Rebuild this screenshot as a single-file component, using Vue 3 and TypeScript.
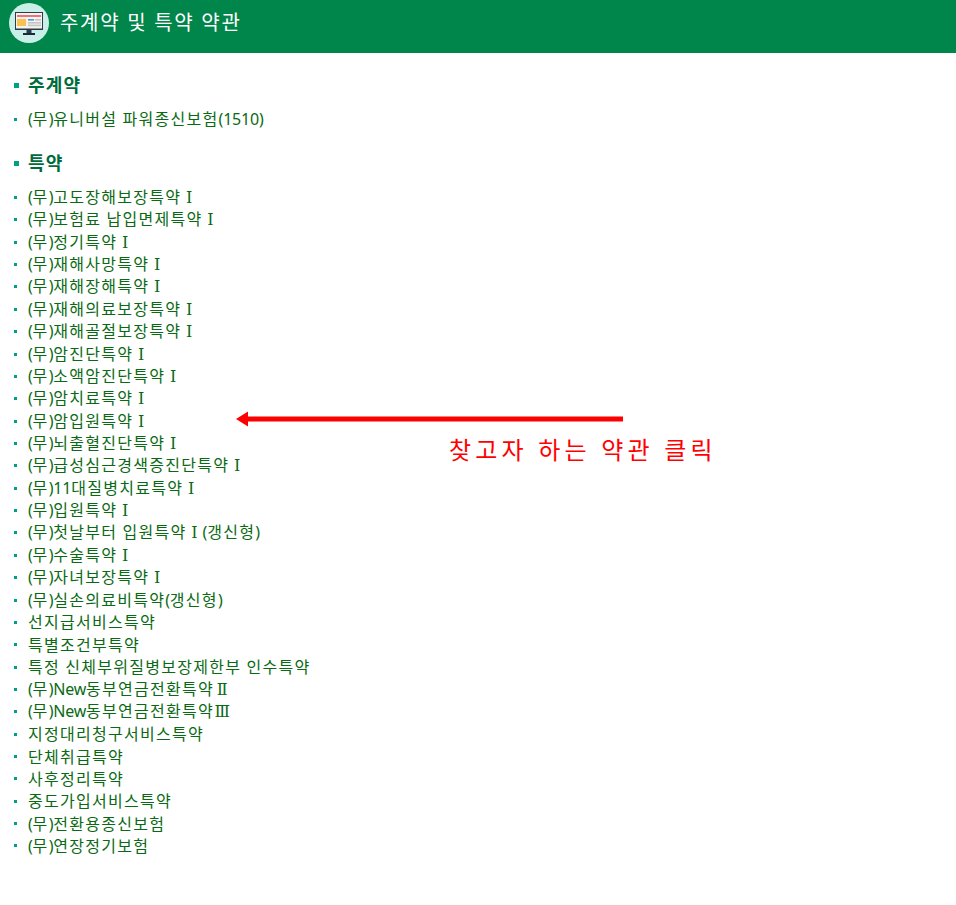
<script setup lang="ts">
interface Run { text: string; kind: string }

const riders: string[] = [
  '(무)고도장해보장특약Ⅰ','(무)보험료 납입면제특약Ⅰ','(무)정기특약Ⅰ','(무)재해사망특약Ⅰ','(무)재해장해특약Ⅰ',
  '(무)재해의료보장특약Ⅰ','(무)재해골절보장특약Ⅰ','(무)암진단특약Ⅰ','(무)소액암진단특약Ⅰ','(무)암치료특약Ⅰ',
  '(무)암입원특약Ⅰ','(무)뇌출혈진단특약Ⅰ','(무)급성심근경색증진단특약Ⅰ','(무)11대질병치료특약Ⅰ','(무)입원특약Ⅰ',
  '(무)첫날부터 입원특약Ⅰ(갱신형)','(무)수술특약Ⅰ','(무)자녀보장특약Ⅰ','(무)실손의료비특약(갱신형)','선지급서비스특약',
  '특별조건부특약','특정 신체부위질병보장제한부 인수특약','(무)New동부연금전환특약Ⅱ','(무)New동부연금전환특약Ⅲ','지정대리청구서비스특약',
  '단체취급특약','사후정리특약','중도가입서비스특약','(무)전환용종신보험','(무)연장정기보험',
]

// Hangul runs are spaced wider than Latin ones, numerals sit in a full-width box
function runs(text: string): Run[] {
  const parts = text.match(/[가-힣]+|[ⅠⅡⅢ]|[^가-힣ⅠⅡⅢ]+/g) ?? []
  return parts.map((p) => ({
    text: p,
    kind: /[가-힣]/.test(p) ? 'ko' : /[ⅠⅡⅢ]/.test(p) ? 'num' : 'lat',
  }))
}
</script>

<template>
  <div class="page">
    <header class="bar">
      <span class="badge">
        <svg width="28" height="23" viewBox="0 0 28 23">
          <rect x="0" y="0" width="28" height="18" fill="#2b3a4d" />
          <rect x="1" y="1" width="26" height="15.5" fill="#f6f2ec" />
          <rect x="2" y="3" width="24" height="2" fill="#f0707c" />
          <rect x="2" y="7" width="9" height="7" fill="#fbc04f" />
          <rect x="13" y="7" width="6" height="1.6" fill="#3f9fe0" />
          <rect x="20" y="7" width="6" height="1.6" fill="#c4c4c4" />
          <rect x="13" y="10" width="13" height="1.6" fill="#c4c4c4" />
          <rect x="13" y="12.6" width="13" height="1.6" fill="#c4c4c4" />
          <rect x="11.5" y="18" width="5" height="3" fill="#2b3a4d" />
          <rect x="8" y="21" width="12" height="2" fill="#1c2836" />
        </svg>
      </span>
      <h1 class="title">주계약 및 특약 약관</h1>
    </header>
    <main class="body">
      <h2 class="head">주계약</h2>
      <ul class="list">
        <li class="item">
          <span class="label"><span v-for="(p, i) in runs('(무)유니버설 파워종신보험(1510)')" :key="i" :class="p.kind">{{ p.text }}</span></span>
        </li>
      </ul>
      <h2 class="head second">특약</h2>
      <ul class="list">
        <li v-for="r in riders" :key="r" class="item">
          <span class="label"><span v-for="(p, i) in runs(r)" :key="i" :class="p.kind">{{ p.text }}</span></span>
        </li>
      </ul>
      <div class="note">
        <svg class="arrow" width="387" height="16" viewBox="0 0 387 16">
          <path d="M0 8 L12 0.5 V5.5 H387 V10.5 H12 V15.5 Z" fill="#ff0000" />
        </svg>
        <span class="note-text">찾고자 하는 약관 클릭</span>
      </div>
    </main>
  </div>
</template>

<style>
html, body { margin: 0; background: #fff; }
</style>

<style scoped>
.page {
  position: relative;
  height: 905px;
  overflow: hidden;
  font-family: "Noto Sans", "Noto Sans CJK KR", sans-serif;
}
.bar {
  display: flex;
  align-items: flex-start;
  gap: 11px;
  height: 53px;
  box-sizing: border-box;
  padding: 3px 0 0 9px;
  background: #00854a;
}
.badge {
  width: 40px;
  height: 40px;
  border-radius: 50%;
  background: #c9efe9;
  display: flex;
  align-items: center;
  justify-content: center;
}
.title {
  margin: 6px 0 0;
  color: #fff;
  font-size: 20px;
  font-weight: 400;
  line-height: 28px;
  letter-spacing: 1.7px;
  white-space: nowrap;
}
.body { padding: 22px 0 0 14px; }
.head {
  margin: 0;
  display: flex;
  align-items: center;
  gap: 9px;
  color: #006b3c;
  font-size: 18px;
  font-weight: 700;
  line-height: 20px;
  letter-spacing: 1.2px;
}
.head::before {
  content: "";
  width: 5px;
  height: 5px;
  background: #00a085;
}
.head.second { margin-top: 23px; }
.list { list-style: none; margin: 13px 0 0; padding: 0; }
.item {
  display: flex;
  align-items: center;
  gap: 10px;
  height: 22.37px;
  color: #0a6a14;
  font-size: 16px;
  white-space: nowrap;
}
.item::before {
  content: "";
  flex: none;
  width: 3px;
  height: 3px;
  background: #00a085;
}
.label { white-space: pre; line-height: 20px; word-spacing: 1.3px; padding-left: 1px; }
.ko { letter-spacing: 1.28px; }
.lat { letter-spacing: -0.2px; }
.num {
  display: inline-block;
  width: 16px;
  text-align: center;
  font-family: "DejaVu Serif", serif;
}
.note { position: absolute; left: 236px; top: 411px; }
.arrow { display: block; }
.note-text {
  position: absolute;
  left: 213px;
  top: 22px;
  color: #ff0000;
  font-size: 24px;
  line-height: 34px;
  letter-spacing: 4.2px;
  white-space: nowrap;
}
</style>
